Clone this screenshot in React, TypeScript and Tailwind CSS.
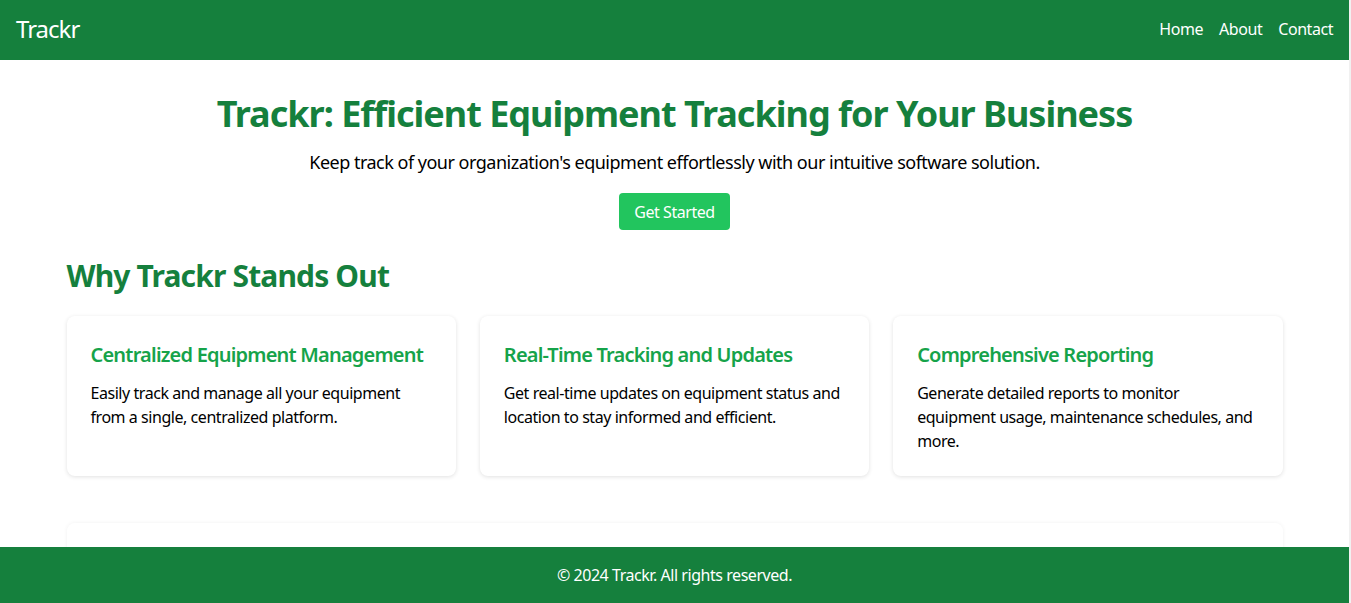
import React from 'react';

const features = [
  {
    title: 'Centralized Equipment Management',
    body: 'Easily track and manage all your equipment from a single, centralized platform.',
  },
  {
    title: 'Real-Time Tracking and Updates',
    body: 'Get real-time updates on equipment status and location to stay informed and efficient.',
  },
  {
    title: 'Comprehensive Reporting',
    body: 'Generate detailed reports to monitor equipment usage, maintenance schedules, and more.',
  },
];

const FeatureCard: React.FC<{ feature: typeof features[0] }> = ({ feature }) => {
  return (
    <div className="bg-white rounded-lg shadow-[0_1px_4px_rgba(0,0,0,0.12)] p-6">
      <h3 className="text-xl leading-7 font-semibold text-[#16a34a] mt-px mb-3 tracking-[-0.8px] whitespace-nowrap">
        {feature.title}
      </h3>
      <p className="text-base leading-6 text-black tracking-[-0.45px] -mb-px">{feature.body}</p>
    </div>
  );
};

export default function App() {
  return (
    <div
      className="h-[603px] flex flex-col overflow-hidden bg-white border-r-2 border-[#f1f1f1] text-black tracking-[-0.45px]"
      style={{ fontFamily: '"Noto Sans", "Open Sans", sans-serif' }}
    >
      <header className="h-[60px] shrink-0 bg-[#15803d] text-white flex items-center justify-between px-4">
        <span className="text-2xl -mt-[2px] tracking-[-1px]">Trackr</span>
        <nav className="flex gap-4 text-base -mt-[2px]">
          <a href="#">Home</a>
          <a href="#">About</a>
          <a href="#">Contact</a>
        </nav>
      </header>

      <main className="flex-1 overflow-hidden">
        <section className="text-center pt-[34px]">
          <h1 className="text-4xl leading-10 font-bold text-[#15803d] mb-[14px] tracking-[-1px]">
            Trackr: Efficient Equipment Tracking for Your Business
          </h1>
          <p className="text-lg leading-7 mb-[17px] tracking-[-0.5px]">
            Keep track of your organization's equipment effortlessly with our intuitive software solution.
          </p>
          <button className="bg-[#22c55e] text-white rounded h-[37px] w-[111px] text-base whitespace-nowrap">
            Get Started
          </button>
        </section>

        <section className="max-w-[1280px] mx-auto px-8 mt-[28px]">
          <h2 className="text-3xl leading-9 font-bold text-[#15803d] mb-[22px] tracking-[-0.85px]">
            Why Trackr Stands Out
          </h2>
          <div className="grid grid-cols-3 gap-6">
            {features.map(f => (
              <FeatureCard key={f.title} feature={f} />
            ))}
          </div>
          <div className="mt-[47px] h-[120px] bg-white rounded-lg shadow-[0_0_4px_rgba(0,0,0,0.06)]" />
        </section>
      </main>

      <footer className="h-[56px] shrink-0 bg-[#15803d] text-white flex items-center justify-center text-base">
        © 2024 Trackr. All rights reserved.
      </footer>
    </div>
  );
}
